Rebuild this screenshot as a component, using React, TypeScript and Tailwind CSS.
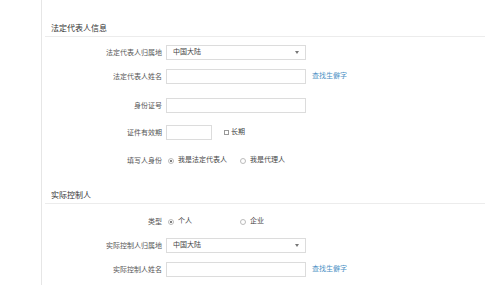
import React from "react";

const FONT = "font-['Liberation_Sans','Noto_Sans_CJK_SC',sans-serif]";

function Label({ text }: { text: string }) {
  return <span className="w-[124px] shrink-0 text-right pr-[4px] text-[7px] leading-[15px] text-[#555]">{text}</span>;
}

function TextBox({ w = "w-[140px]" }: { w?: string }) {
  return <div className={`${w} h-[15px] border border-[#dcdcdc] bg-white`} />;
}

function Select({ value }: { value: string }) {
  return (
    <div className="w-[140px] h-[15px] border border-[#dcdcdc] bg-white flex items-center justify-between pl-[6px] pr-[6px]">
      <span className="text-[7px] text-[#444]">{value}</span>
      <span className="w-0 h-0 border-l-[2.5px] border-r-[2.5px] border-t-[3px] border-l-transparent border-r-transparent border-t-[#777]" />
    </div>
  );
}

function Radio({ checked, label }: { checked?: boolean; label: string }) {
  return (
    <span className="flex items-center gap-[4px] text-[7px] text-[#444]">
      <span className="w-[6px] h-[6px] rounded-full border border-[#bbb] flex items-center justify-center">
        {checked && <span className="w-[2px] h-[2px] rounded-full bg-[#555]" />}
      </span>
      {label}
    </span>
  );
}

function Link() {
  return <span className="ml-[6px] text-[7px] text-[#4a90c4]">查找生僻字</span>;
}

function Row({ label, mt, children }: { label: string; mt: string; children: React.ReactNode }) {
  return (
    <div className={`flex items-center h-[15px] ${mt}`}>
      <Label text={label} />
      {children}
    </div>
  );
}

function SectionTitle({ title, mt }: { title: string; mt: string }) {
  return (
    <div className={mt}>
      <div className="pl-[9px] text-[8px] leading-[12px] text-[#333]">{title}</div>
      <div className="mt-[1px] ml-[3px] h-px bg-[#ececec]" />
    </div>
  );
}

export default function App() {
  return (
    <div className={`w-[500px] h-[285px] bg-white flex overflow-hidden ${FONT}`}>
      <div className="w-[42px] shrink-0 border-r border-[#e6e6e6]" />
      <div className="flex-1 pr-[15px]">
        <SectionTitle title="法定代表人信息" mt="mt-[23px]" />

        <Row label="法定代表人归属地" mt="mt-[8px]">
          <Select value="中国大陆" />
        </Row>
        <Row label="法定代表人姓名" mt="mt-[9px]">
          <TextBox />
          <Link />
        </Row>
        <Row label="身份证号" mt="mt-[14px]">
          <TextBox />
        </Row>
        <Row label="证件有效期" mt="mt-[12px]">
          <TextBox w="w-[46px]" />
          <span className="ml-[12px] flex items-center gap-[2px] text-[7px] text-[#444]">
            <span className="w-[5px] h-[5px] border border-[#999]" />
            长期
          </span>
        </Row>
        <Row label="填写人身份" mt="mt-[13px]">
          <div className="flex items-center">
            <span className="w-[74px] pl-[2px]">
              <Radio checked label="我是法定代表人" />
            </span>
            <Radio label="我是代理人" />
          </div>
        </Row>

        <SectionTitle title="实际控制人" mt="mt-[22px]" />

        <Row label="类型" mt="mt-[10px]">
          <div className="flex items-center">
            <span className="w-[74px] pl-[2px]">
              <Radio checked label="个人" />
            </span>
            <Radio label="企业" />
          </div>
        </Row>
        <Row label="实际控制人归属地" mt="mt-[9px]">
          <Select value="中国大陆" />
        </Row>
        <Row label="实际控制人姓名" mt="mt-[9px]">
          <TextBox />
          <Link />
        </Row>
      </div>
    </div>
  );
}
